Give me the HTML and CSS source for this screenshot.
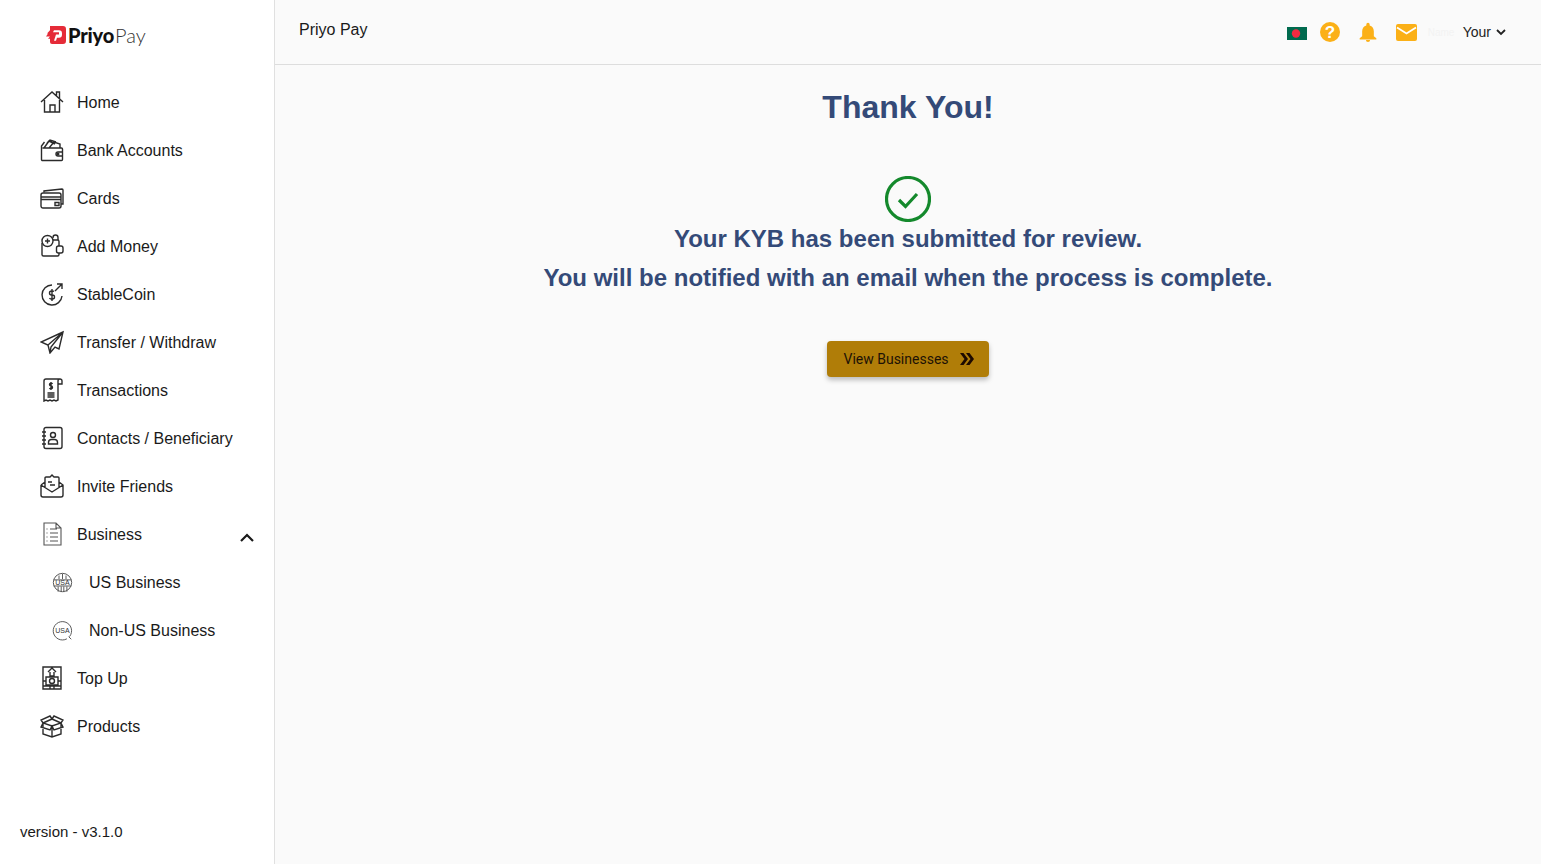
FILE: index.html
```html
<!DOCTYPE html>
<html lang="en">
<head>
  <meta charset="UTF-8" />
  <meta name="viewport" content="width=device-width, initial-scale=1.0" />
  <title>Priyo Pay</title>
  <link rel="stylesheet" href="styles.css">
</head>
<body>
  <div class="app">
    <aside class="sidebar">
      <div class="logo">
        <svg class="logo-mark" viewBox="0 0 20 17" width="20" height="18" preserveAspectRatio="none">
          <path fill="#e52b38" d="M4 0h13a3 3 0 0 1 3 3v11a3 3 0 0 1-3 3H6a2 2 0 0 1-2-2v-3H2l2-2H0l2-3H1l3-3z"/>
          <path fill="#fff" d="M8 4h5a3 3 0 0 1 3 3v1a3 3 0 0 1-3 3h-2l-1 3H8l2-6h3V6H7z"/>
        </svg>
        <span class="logo-bold">Priyo</span><span class="logo-light">Pay</span>
      </div>

      <nav class="menu">
        <a class="menu-item">
          <svg class="icon" viewBox="0 0 24 24"><path d="M1 12 12 2l11 10M4.500 10v12h15V10M10 22v-7h5v7M16.500 5.500V2h3v6.500"/></svg>
          <span>Home</span>
        </a>
        <a class="menu-item">
          <svg class="icon" viewBox="0 0 24 24"><path d="M2.500 10h19a1 1 0 0 1 1 1v10.500a1 1 0 0 1-1 1h-19a1 1 0 0 1-1-1V8l3-4M4 10l5-7 6 3M9 10l5-6 6 2v4M7 5l3-3 6 2M22.500 14H18a2 2 0 0 0 0 4h4.500"/><circle cx="18" cy="16" r=".8"/></svg>
          <span>Bank Accounts</span>
        </a>
        <a class="menu-item">
          <svg class="icon" viewBox="0 0 24 24"><rect x="1" y="7" width="20" height="15" rx="2"/><path d="M1 11h20M1 13.500h20M4 6.500V5l18-2a1 1 0 0 1 1 1v14h-2M15 16.500h4v3h-4z"/></svg>
          <span>Cards</span>
        </a>
        <a class="menu-item">
          <svg class="icon" viewBox="0 0 24 24"><path d="M2 9v11.500A1.500 1.500 0 0 0 3.500 22h14a1.500 1.500 0 0 0 1.500-1.500V19M13 6h4.500A1.500 1.500 0 0 1 19 7.500V12"/><circle cx="7.500" cy="7" r="5.500"/><path d="M7.500 4.500v5M5 7h5M13 4V3.500a2.500 2.500 0 0 1 5 0V6"/><rect x="16.500" y="12" width="6.500" height="7" rx="2"/></svg>
          <span>Add Money</span>
        </a>
        <a class="menu-item">
          <svg class="icon" viewBox="0 0 24 24"><path d="M12 3a10 10 0 1 0 10 11M15 9l7-7M17 2h5v5M14 9.500A2 2 0 0 0 12.500 9h-1a2 2 0 0 0 0 4h1a2 2 0 0 1 0 4h-1a2 2 0 0 1-2-1M12 7v12"/></svg>
          <span>StableCoin</span>
        </a>
        <a class="menu-item">
          <svg class="icon" viewBox="0 0 24 24"><path d="M23 2 1 12l7 3 2 8 5-6 4 2zM23 2 8 15M23 2 11 17l-1 6"/></svg>
          <span>Transfer / Withdraw</span>
        </a>
        <a class="menu-item">
          <svg class="icon" viewBox="0 0 24 24"><path d="M18 6V3a2 2 0 0 1 2-2H6a2 2 0 0 0-2 2v20l2-1 2 1 2-1 2 1 2-1 2 1 2-1V6h4V3a2 2 0 0 0-2-2M7.500 15h7M7.500 17h7M7.500 19h7M12.500 6A1.500 1.500 0 0 0 11 5.200c-2 0-2 2.800 0 2.800s2 2.800 0 2.800A1.500 1.500 0 0 1 9.500 10M11 4v8"/></svg>
          <span>Transactions</span>
        </a>
        <a class="menu-item">
          <svg class="icon" viewBox="0 0 24 24"><rect x="4" y="1.500" width="18" height="21" rx="2"/><path d="M2 6h4M2 10h4M2 14h4M2 18h4"/><circle cx="13" cy="9" r="2.500"/><path d="M8.500 18v-1.500a3 3 0 0 1 3-3h3a3 3 0 0 1 3 3V18z"/></svg>
          <span>Contacts / Beneficiary</span>
        </a>
        <a class="menu-item">
          <svg class="icon" viewBox="0 0 24 24"><path d="M1 11v10a2 2 0 0 0 2 2h18a2 2 0 0 0 2-2V11l-4-3M1 11l4-3M1 11l11 7 11-7M5 13.500V4a1 1 0 0 1 1-1h4l2-2 2 2h4a1 1 0 0 1 1 1v9.500M8 8h4M10 11h5"/></svg>
          <span>Invite Friends</span>
        </a>
        <a class="menu-item">
          <svg class="icon icon-thin" viewBox="0 0 24 24"><path d="M4 1h12l5 5v17H4zM16 1v5h5M10 7h7M10 11h8M10 15h8M10 19h8M6.500 7h1M6.500 11h1M6.500 15h1M6.500 19h1"/></svg>
          <span>Business</span>
          <svg class="caret" viewBox="0 0 14 9"><path d="m1 8 6-6 6 6"/></svg>
        </a>
        <a class="menu-item sub-item">
          <svg class="icon icon-grey" viewBox="0 0 24 24"><circle cx="12" cy="12" r="10.500"/><path d="M2 9h20M2 16h20M7 16.500v6M10.500 16.500V23M13.500 16.500V23M17 16.500v6M8 4v4M12 2v6M16 4v4"/><text class="icon-text" x="12" y="15" text-anchor="middle">USA</text></svg>
          <span>US Business</span>
        </a>
        <a class="menu-item sub-item">
          <svg class="icon icon-grey" viewBox="0 0 24 24"><path d="M20 19a10.500 10.500 0 1 0-3 2.500M19 19l3 3"/><text class="icon-text" x="12" y="14.500" text-anchor="middle">USA</text></svg>
          <span>Non-US Business</span>
        </a>
        <a class="menu-item">
          <svg class="icon" viewBox="0 0 24 24"><path d="M3 1h18v22H3zM3 20h18M10 23v-3M14 23v-3M8 6l4-4 4 4M10 6v4h4V6M6 11h12v8H6z"/><circle cx="12" cy="15" r="2.500"/><path d="M3 15h3M18 15h3"/></svg>
          <span>Top Up</span>
        </a>
        <a class="menu-item">
          <svg class="icon" viewBox="0 0 24 24"><path d="M3 9v11l9 3 9-3V9M12 12v11M12 12 3 9 1 6l9-4 2 3 2-3 9 4-2 3zM12 5 3 9M12 5l9 4M3 9l-2 4 9 3 2-4 2 4 9-3-2-4"/></svg>
          <span>Products</span>
        </a>
      </nav>

      <div class="version">version - v3.1.0</div>
    </aside>

    <div class="content">
      <header class="topbar">
        <div class="page-name">Priyo Pay</div>
        <div class="top-actions">
          <svg class="flag" viewBox="0 0 20 13"><rect width="20" height="13" fill="#006a4e"/><circle cx="9" cy="6.500" r="4.200" fill="#f42a41"/></svg>
          <svg class="top-icon help" viewBox="0 0 20 20"><circle cx="10" cy="10" r="10" fill="#fbb017"/><text class="help-mark" x="10" y="16" text-anchor="middle">?</text></svg>
          <svg class="top-icon bell" viewBox="0 0 24 24"><path fill="#fbb017" d="M12 24a2.500 2.500 0 0 0 2.500-2.500h-5A2.500 2.500 0 0 0 12 24zm7-7v-6c0-3.400-1.900-6.200-5-6.900V3a2 2 0 0 0-4 0v1.100C6.900 4.800 5 7.600 5 11v6l-3 2.500V21h20v-1.500z"/></svg>
          <svg class="mail" viewBox="0 0 21 17"><path fill="#fbb017" d="M2 0h17a2 2 0 0 1 2 2v13a2 2 0 0 1-2 2H2a2 2 0 0 1-2-2V2a2 2 0 0 1 2-2z"/><path fill="none" stroke="#fff" stroke-width="1.800" d="m1 3.500 9.500 6 9.500-6"/></svg>
          <div class="user">
            <span class="user-hidden">Name</span>
            <span>Your</span>
            <svg class="user-caret" viewBox="0 0 10 7"><path d="m1 1 4 4 4-4"/></svg>
          </div>
        </div>
      </header>

      <main class="thanks">
        <h1>Thank You!</h1>
        <svg class="check" viewBox="0 0 46 46"><circle cx="23" cy="23" r="21.500"/><path d="m14 24 6.500 6.500L32 18"/></svg>
        <p>Your KYB has been submitted for review.</p>
        <p>You will be notified with an email when the process is complete.</p>
        <button class="view-btn">
          View Businesses
          <svg viewBox="0 0 14 12"><path d="M0 0h3.500L8 6l-4.500 6H0l4.500-6zM6 0h3.500L14 6l-4.500 6H6l4.500-6z"/></svg>
        </button>
      </main>
    </div>
  </div>
</body>
</html>
```

FILE: styles.css
```css
* {
  box-sizing: border-box;
}

body {
  margin: 0;
  background: #fafafa;
  color: #1a1a1a;
  font-family: "Liberation Sans", Arial, sans-serif;
}

.app {
  display: flex;
  height: 864px;
  overflow: hidden;
}

/* sidebar */
.sidebar {
  width: 275px;
  flex-shrink: 0;
  display: flex;
  flex-direction: column;
  background: #fff;
  border-right: 1px solid #e0e0e0;
}

.logo {
  height: 79px;
  display: flex;
  align-items: center;
  padding: 0 0 9px 46px;
  font-family: Lato, sans-serif;
  font-size: 20px;
}

.logo-mark {
  margin-right: 3px;
}

.logo-bold {
  font-weight: 900;
  color: #111;
  margin-left: -1px;
  margin-right: 1px;
  letter-spacing: -0.2px;
}

.logo-light {
  font-weight: 300;
  color: #333;
}

.menu {
  flex: 1;
}

.menu-item {
  height: 48px;
  display: flex;
  align-items: center;
  padding: 0 20px 0 40px;
  font-size: 16px;
  color: #1a1a1a;
}

.menu-item .icon {
  margin-right: 13px;
}

.sub-item {
  padding-left: 52px;
}

.icon {
  width: 24px;
  height: 24px;
  flex-shrink: 0;
  fill: none;
  stroke: #2b2b2b;
  stroke-width: 1.400;
  position: relative;
  top: -1px;
}

.menu-item .icon-thin {
  stroke: #555;
  stroke-width: 1.100;
}

.menu-item .icon-grey {
  width: 21px;
  height: 21px;
  margin-right: 16px;
  stroke: #555;
  stroke-width: 1.100;
}

.icon-text {
  font-size: 8px;
  font-family: "Liberation Sans", sans-serif;
  stroke: none;
  fill: #333;
}

.caret {
  width: 14px;
  height: 9px;
  margin-left: auto;
  margin-top: 5px;
  fill: none;
  stroke: #1a1a1a;
  stroke-width: 2.200;
}

.version {
  padding: 0 0 24px 20px;
  font-size: 15px;
}

/* top bar */
.content {
  flex: 1;
  min-width: 0;
}

.topbar {
  height: 65px;
  display: flex;
  justify-content: space-between;
  padding: 20px 35px 0 24px;
  border-bottom: 1px solid #ddd;
}

.page-name {
  font-size: 16px;
  line-height: 19px;
}

.top-actions {
  display: flex;
  align-items: center;
  height: 24px;
}

.flag {
  width: 20px;
  height: 13px;
  margin-right: 13px;
  margin-top: 3px;
}

.top-icon {
  width: 20px;
  height: 20px;
}

.help {
  margin-right: 16px;
}

.help-mark {
  font-size: 17px;
  font-weight: bold;
  fill: #fff;
  font-family: "Liberation Sans", sans-serif;
}

.bell {
  width: 24px;
  height: 20px;
  margin-right: 16px;
}

.mail {
  width: 21px;
  height: 17px;
}

.user {
  display: flex;
  align-items: center;
  margin-left: 11px;
  font-size: 14px;
  color: #222;
}

.user-hidden {
  color: #f3f3f3;
  font-size: 10px;
  width: 35px;
}

.user-caret {
  width: 10px;
  height: 7px;
  margin-left: 5px;
  fill: none;
  stroke: #222;
  stroke-width: 1.800;
}

/* main message */
.thanks {
  display: flex;
  flex-direction: column;
  align-items: center;
  color: #344a78;
}

.thanks h1 {
  margin: 24px 0 0;
  font-size: 32px;
  line-height: 37px;
}

.check {
  width: 46px;
  height: 46px;
  margin-top: 50px;
  margin-bottom: -3px;
  fill: none;
  stroke: #14892c;
  stroke-width: 3.200;
}

.thanks p {
  margin: 0;
  font-size: 24px;
  font-weight: bold;
  line-height: 39px;
}

.view-btn {
  display: flex;
  align-items: center;
  gap: 11px;
  height: 36px;
  margin-top: 44px;
  padding: 0 15px 0 16px;
  border: none;
  border-radius: 4px;
  background: #b07d08;
  color: #1d1206;
  font-family: Roboto, sans-serif;
  font-size: 14px;
  box-shadow: 0 3px 5px rgba(0, 0, 0, 0.25);
}

.view-btn svg {
  width: 14px;
  height: 12px;
  fill: #1d0a00;
}
```
